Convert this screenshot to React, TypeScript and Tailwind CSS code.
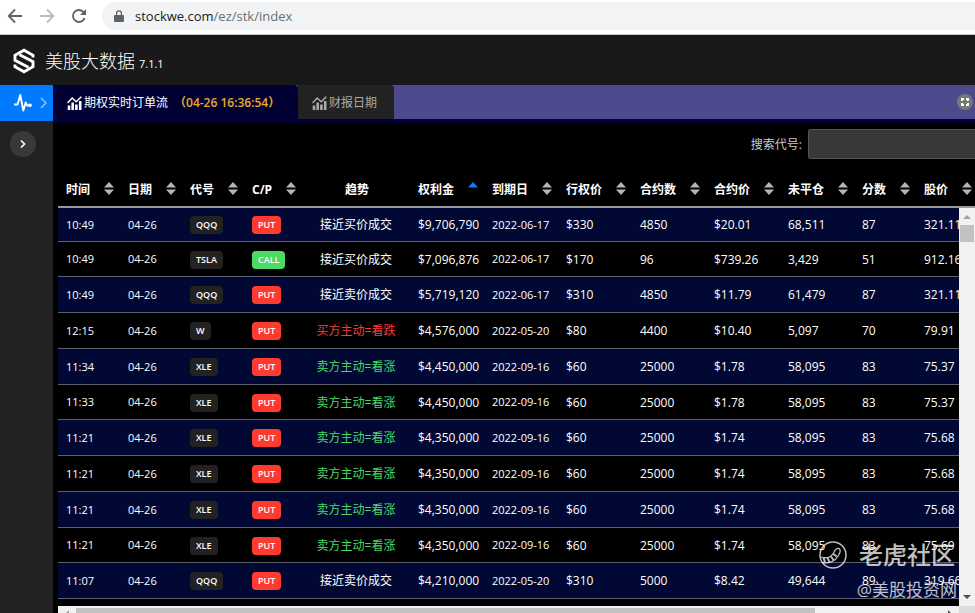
import React from "react";

const uiFont = "font-['Open_Sans','Noto_Sans_CJK_SC',sans-serif]";

type Trend = "接近买价成交" | "接近卖价成交" | "买方主动=看跌" | "卖方主动=看涨";

interface Order {
  time: string;
  symbol: string;
  side: "PUT" | "CALL";
  trend: Trend;
  premium: string;
  expiry: string;
  strike: string;
  size: string;
  price: string;
  open: string;
  score: string;
  stock: string;
}

function order(
  time: string, symbol: string, side: "PUT" | "CALL", trend: Trend, premium: string, expiry: string,
  strike: string, size: string, price: string, open: string, score: string, stock: string,
): Order {
  return { time, symbol, side, trend, premium, expiry, strike, size, price, open, score, stock };
}

const orders: Order[] = [
  order("10:49", "QQQ", "PUT", "接近买价成交", "$9,706,790", "2022-06-17", "$330", "4850", "$20.01", "68,511", "87", "321.11"),
  order("10:49", "TSLA", "CALL", "接近买价成交", "$7,096,876", "2022-06-17", "$170", "96", "$739.26", "3,429", "51", "912.16"),
  order("10:49", "QQQ", "PUT", "接近卖价成交", "$5,719,120", "2022-06-17", "$310", "4850", "$11.79", "61,479", "87", "321.11"),
  order("12:15", "W", "PUT", "买方主动=看跌", "$4,576,000", "2022-05-20", "$80", "4400", "$10.40", "5,097", "70", "79.91"),
  order("11:34", "XLE", "PUT", "卖方主动=看涨", "$4,450,000", "2022-09-16", "$60", "25000", "$1.78", "58,095", "83", "75.37"),
  order("11:33", "XLE", "PUT", "卖方主动=看涨", "$4,450,000", "2022-09-16", "$60", "25000", "$1.78", "58,095", "83", "75.37"),
  order("11:21", "XLE", "PUT", "卖方主动=看涨", "$4,350,000", "2022-09-16", "$60", "25000", "$1.74", "58,095", "83", "75.68"),
  order("11:21", "XLE", "PUT", "卖方主动=看涨", "$4,350,000", "2022-09-16", "$60", "25000", "$1.74", "58,095", "83", "75.68"),
  order("11:21", "XLE", "PUT", "卖方主动=看涨", "$4,350,000", "2022-09-16", "$60", "25000", "$1.74", "58,095", "83", "75.68"),
  order("11:21", "XLE", "PUT", "卖方主动=看涨", "$4,350,000", "2022-09-16", "$60", "25000", "$1.74", "58,095", "83", "75.69"),
  order("11:07", "QQQ", "PUT", "接近卖价成交", "$4,210,000", "2022-05-20", "$310", "5000", "$8.42", "49,644", "89", "319.66"),
];

const trendColor: Record<Trend, string> = {
  接近买价成交: "text-white",
  接近卖价成交: "text-white",
  "买方主动=看跌": "text-[#ff3a35]",
  "卖方主动=看涨": "text-[#4cd964]",
};

const columns: { label: string; sort: "none" | "both" | "up"; width: string }[] = [
  { label: "时间", sort: "both", width: "w-[62px]" },
  { label: "日期", sort: "both", width: "w-[62px]" },
  { label: "代号", sort: "both", width: "w-[62px]" },
  { label: "C/P", sort: "both", width: "w-[58px]" },
  { label: "趋势", sort: "none", width: "w-[108px]" },
  { label: "权利金", sort: "up", width: "w-[74px]" },
  { label: "到期日", sort: "both", width: "w-[74px]" },
  { label: "行权价", sort: "both", width: "w-[74px]" },
  { label: "合约数", sort: "both", width: "w-[74px]" },
  { label: "合约价", sort: "both", width: "w-[74px]" },
  { label: "未平仓", sort: "both", width: "w-[74px]" },
  { label: "分数", sort: "both", width: "w-[62px]" },
  { label: "股价", sort: "both", width: "w-[62px]" },
];

function ColumnWidths() {
  return (
    <colgroup>
      {columns.map((c) => (
        <col key={c.label} className={c.width} />
      ))}
    </colgroup>
  );
}

function BrowserBar() {
  return (
    <div className="flex h-[35px] shrink-0 items-center border-b border-[#c8cacd] bg-white pb-0.5">
      <button aria-label="Back" className="ml-[7px] text-[#5f6368]">
        <svg width="16" height="16" viewBox="0 0 16 16" fill="none" stroke="currentColor" strokeWidth="1.8">
          <path d="M15 8H2M8 1.5 1.7 8 8 14.5" />
        </svg>
      </button>
      <button aria-label="Forward" className="ml-4 text-[#babcbe]">
        <svg width="16" height="16" viewBox="0 0 16 16" fill="none" stroke="currentColor" strokeWidth="1.8">
          <path d="M1 8h13M8 1.5 14.3 8 8 14.5" />
        </svg>
      </button>
      <button aria-label="Reload" className="ml-4 text-[#5f6368]">
        <svg width="16" height="16" viewBox="0 0 16 16" fill="none" stroke="currentColor" strokeWidth="1.9">
          <path d="M13.6 10A6 6 0 1 1 12.3 3.8L14 5.5" />
          <path d="M15 1v6H9z" fill="currentColor" stroke="none" />
        </svg>
      </button>
      <div className="ml-[15px] flex h-7 flex-1 items-center rounded-l-full bg-[#f1f3f4] pl-3">
        <svg width="10" height="13" viewBox="0 0 10 13" className="text-[#5f6368]">
          <path d="M1 5h8a1 1 0 0 1 1 1v5a1 1 0 0 1-1 1H1a1 1 0 0 1-1-1V6a1 1 0 0 1 1-1z" fill="currentColor" />
          <path d="M2.6 5.5V3.2a2.4 2.4 0 0 1 4.8 0v2.3" fill="none" stroke="currentColor" strokeWidth="1.3" />
        </svg>
        <span className="ml-[11px] pt-0.5 text-[13px] text-[#202124]">
          stockwe.com<span className="text-[#6b6f73]">/ez/stk/index</span>
        </span>
      </div>
    </div>
  );
}

function Logo() {
  return (
    <svg width="22" height="26" viewBox="0 0 22 26" fill="none" stroke="#fff" strokeWidth="2.9">
      <path d="M20 9.500V7.300L11 2.200 2 7.300v5l9 4.700 4.500 2.300" />
      <path d="M2 16.500v2.200l9 5.100 9-5.100v-5L11 9 6.500 6.700" />
    </svg>
  );
}

function ChartIcon() {
  return (
    <svg width="15" height="14" viewBox="0 0 15 14" fill="none" stroke="currentColor">
      <path d="M2 14V9.500M5.700 14V6.500M9.400 14V8.500M13.200 14V5" strokeWidth="2.600" />
      <path d="M.6 7 5.200 2l4 3.800L14.300.700" strokeWidth="1.500" />
    </svg>
  );
}

function SortIcon({ dir }: { dir: "both" | "up" }) {
  return (
    <svg width="10" height="13" viewBox="0 0 10 13" className="mb-0.5 shrink-0">
      {dir === "both" ? (
        <path d="M0 5.500 5 0l5 5.500zM0 7.500h10L5 13z" fill="#b4b4b4" />
      ) : (
        <path d="M0 5.500 5 0l5 5.500z" fill="#0a7cff" />
      )}
    </svg>
  );
}

function Sidebar() {
  return (
    <nav className="flex w-[53px] shrink-0 flex-col items-start bg-[#222]">
      <button aria-label="Order flow" className="flex h-9 w-full items-center bg-[#007aff] pl-3.5 text-white">
        <svg width="18" height="18" viewBox="0 0 18 18" fill="none" stroke="currentColor" strokeWidth="1.900" strokeLinejoin="round">
          <path d="M0 10.500h3.500L6.300 1l3 15.500 2.400-8 1.500 3H16" />
          <circle cx="16" cy="11.300" r="1.800" fill="currentColor" stroke="none" />
        </svg>
        <svg width="7" height="12" viewBox="0 0 7 12" fill="none" stroke="#8cc4ff" strokeWidth="1.500" className="ml-2">
          <path d="m1 1 5 5-5 5" />
        </svg>
      </button>
      <button aria-label="Expand" className="mt-2.5 ml-2.5 flex size-[26px] items-center justify-center rounded-full bg-[#393939] text-white">
        <svg width="6" height="8" viewBox="0 0 6 8" fill="none" stroke="currentColor" strokeWidth="1.600">
          <path d="m1 .5 3.500 3.500L1 7.500" />
        </svg>
      </button>
    </nav>
  );
}

function TabBar() {
  return (
    <div className="flex h-[38px] shrink-0 border-b-4 border-[#000033] bg-[#4d4a8d] text-xs">
      <button className="flex w-[245px] items-center rounded-tr bg-[#000033] pt-0.5 pl-3.5 text-white">
        <ChartIcon />
        <span className="ml-0.5">期权实时订单流</span>
        <span className="ml-1.5 font-semibold text-[#e8a92c]">（04-26 16:36:54）</span>
      </button>
      <button className="flex w-24 items-center rounded-tr bg-[#222] pt-0.5 pl-3.5 text-[#a9a9a9]">
        <ChartIcon />
        <span className="ml-0.5">财报日期</span>
      </button>
      <button aria-label="Fullscreen" className="mr-0.5 ml-auto flex size-4 items-center justify-center self-center rounded-full bg-[#777]">
        <svg width="8" height="8" viewBox="0 0 8 8" fill="none" stroke="#fff" strokeWidth="2">
          <path d="M1 3V1h2M5 1h2v2M7 5v2H5M3 7H1V5" />
        </svg>
      </button>
    </div>
  );
}

function HeaderTable() {
  return (
    <table className="w-[920px] table-fixed border-collapse text-xs text-white">
      <ColumnWidths />
      <thead>
        <tr className="h-9 border-b-2 border-[#999]">
          {columns.map((c) => (
            <th key={c.label} className="p-0 pt-0.5 pr-1.5 pl-2 font-bold whitespace-nowrap">
              {c.sort === "none" ? (
                c.label
              ) : (
                <button className="flex w-full items-center justify-between">
                  {c.label}
                  <SortIcon dir={c.sort} />
                </button>
              )}
            </th>
          ))}
        </tr>
      </thead>
    </table>
  );
}

function BodyTable() {
  return (
    <table className="w-[920px] table-fixed border-collapse text-xs text-white">
      <ColumnWidths />
      <tbody>
        {orders.map((o, i) => (
          <tr
            key={i}
            className="h-9 border-b border-[#5c606e] odd:bg-[#000833] first:h-[33px] nth-[4n+2]:h-[35px] [&>td]:p-0 [&>td]:pt-0.5 [&>td]:pl-2 [&>td]:whitespace-nowrap"
          >
            <td className="text-[11px]">{o.time}</td>
            <td className="text-[11px]">04-26</td>
            <td>
              <span className="inline-block h-[18px] rounded bg-[#222] px-1.5 align-middle text-[9px] leading-[18px] font-semibold">{o.symbol}</span>
            </td>
            <td>
              <span
                className={`inline-block h-[18px] rounded px-1.5 align-middle text-[9px] leading-[18px] font-semibold ${o.side === "PUT" ? "bg-[#ff3b30]" : "bg-[#4cd964]"}`}
              >
                {o.side}
              </span>
            </td>
            <td>
              <div className={`pr-2 text-center ${trendColor[o.trend]}`}>{o.trend}</div>
            </td>
            <td>{o.premium}</td>
            <td className="text-[11px]">{o.expiry}</td>
            <td>{o.strike}</td>
            <td>{o.size}</td>
            <td>{o.price}</td>
            <td>{o.open}</td>
            <td>{o.score}</td>
            <td>{o.stock}</td>
          </tr>
        ))}
      </tbody>
    </table>
  );
}

function VerticalScrollbar() {
  return (
    <div className="flex w-4 shrink-0 flex-col items-center bg-[#f1f1f1]">
      <svg width="8" height="4" viewBox="0 0 8 4" className="mt-[7px] mb-1.5">
        <path d="M0 4 4 0l4 4z" fill="#a3a3a3" />
      </svg>
      <div className="h-[17px] w-3.5 bg-[#c1c1c1]" />
      <svg width="8" height="4" viewBox="0 0 8 4" className="mt-auto mb-[7px]">
        <path d="M0 0l4 4 4-4z" fill="#505050" />
      </svg>
    </div>
  );
}

function HorizontalScrollbar() {
  return (
    <div className="flex h-4 shrink-0 bg-[#dcdcdc]">
      <div className="flex flex-1 items-center bg-[#f1f1f1]">
        <svg width="4" height="8" viewBox="0 0 4 8" className="mx-[7px] shrink-0">
          <path d="M4 0 0 4l4 4z" fill="#a3a3a3" />
        </svg>
        <div className="h-3 w-[82%] bg-[#c1c1c1]" />
        <svg width="4" height="8" viewBox="0 0 4 8" className="mr-[7px] ml-auto">
          <path d="M0 0l4 4-4 4z" fill="#505050" />
        </svg>
      </div>
      <div className="w-4" />
    </div>
  );
}

function Watermark() {
  return (
    <div className="pointer-events-none absolute right-[18px] bottom-1.5 flex flex-col items-end text-white/75">
      <div className="flex items-center gap-3 pr-0.5">
        <svg width="28" height="28" viewBox="0 0 28 28" fill="none" stroke="currentColor">
          <circle cx="14" cy="14" r="13" strokeWidth="1.500" />
          <path d="M2 16c5 1.500 10 .5 12.500-4 1.500-3 3-5 5-4.500 2.500.5 2 3.500 0 7C16.500 20 10 23 4 21.500" strokeWidth="1.300" />
          <path d="m4.500 17 1.500 4M8.500 17l2 4M12 15.500l2.500 3.500M14.500 13l3 2.500" strokeWidth="2" />
        </svg>
        <span className="text-2xl leading-9 font-medium">老虎社区</span>
      </div>
      <span className="text-[17px] leading-[34px]">@美股投资网</span>
    </div>
  );
}

export default function App() {
  return (
    <div className={`relative flex h-screen flex-col overflow-hidden bg-black ${uiFont}`}>
      <BrowserBar />
      <header className="flex h-[50px] shrink-0 items-center bg-[#191919] pt-0.5 pl-[13px] text-white">
        <Logo />
        <h1 className="ml-2.5 flex items-baseline gap-1 text-lg font-light">
          美股大数据<small className="text-[11px] font-normal">7.1.1</small>
        </h1>
      </header>
      <div className="flex min-h-0 flex-1">
        <Sidebar />
        <main className="flex min-w-0 flex-1 flex-col">
          <TabBar />
          <div className="flex shrink-0 items-center justify-end pt-1.5 pb-3">
            <label htmlFor="symbol-search" className="mr-1.5 pt-0.5 text-xs text-[#ccc]">
              搜索代号:
            </label>
            <input id="symbol-search" className="h-[30px] w-[167px] rounded-l-[3px] border border-r-0 border-[#555] bg-[#383838] px-2 text-xs text-white" />
          </div>
          <section className="ml-[5px] flex shrink-0 flex-col">
            <div className="overflow-hidden">
              <HeaderTable />
            </div>
            <div className="flex">
              <div className="min-w-0 flex-1 overflow-hidden pb-[7px]">
                <BodyTable />
              </div>
              <VerticalScrollbar />
            </div>
            <HorizontalScrollbar />
          </section>
        </main>
      </div>
      <Watermark />
    </div>
  );
}
